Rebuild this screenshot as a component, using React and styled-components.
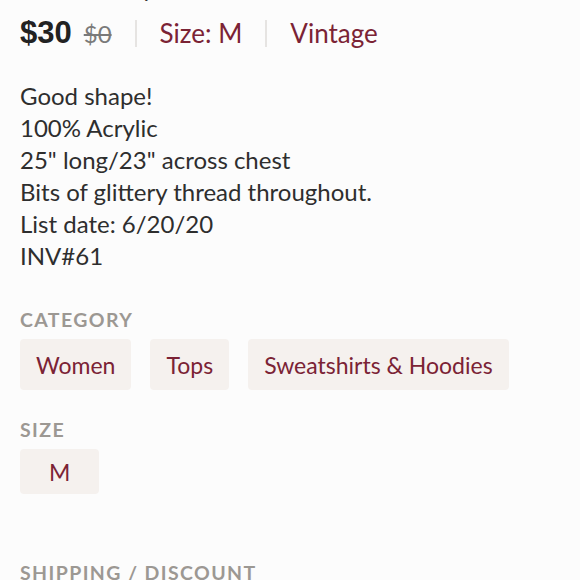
import React from "react";
import styled, { createGlobalStyle } from "styled-components";

const Global = createGlobalStyle`
  html, body { margin: 0; padding: 0; background: #fcfcfc; }
  body { font-family: "Lato", "Noto Sans", sans-serif; overflow: hidden; }
`;

const Page = styled.div`
  width: 580px;
  height: 580px;
  overflow: hidden;
  box-sizing: border-box;
  padding: 0 20px;
`;

const Inner = styled.div`
  margin-top: -28px;
`;

const Title = styled.h1`
  margin: 0;
  font-size: 24px;
  line-height: 32px;
  font-weight: 400;
  color: #333;
  white-space: nowrap;
`;

const PriceRow = styled.div`
  display: flex;
  align-items: center;
  height: 36px;
  margin-top: 11px;
`;

const Price = styled.span`
  font-family: "Liberation Sans", Arial, sans-serif;
  font-weight: 700;
  font-size: 31px;
  color: #222;
`;

const OldPrice = styled.span`
  font-size: 24px;
  color: #7a7a7a;
  text-decoration: line-through;
  margin-left: 12px;
`;

const Divider = styled.span`
  width: 2px;
  height: 27px;
  background: #e6e4e2;
  margin: 0 23px;
`;

const Maroon = styled.span`
  font-size: 26px;
  color: #7b2335;
`;

const Description = styled.div`
  margin-top: 29px;
  font-size: 24px;
  line-height: 32px;
  color: #2e2e2e;
`;

const Label = styled.div`
  margin-top: ${(p) => p.$gap}px;
  font-size: 19.5px;
  line-height: 20px;
  letter-spacing: 1.4px;
  font-weight: 700;
  color: #9c9893;
  text-transform: uppercase;
  white-space: nowrap;
`;

const Chips = styled.div`
  display: flex;
  gap: 19px;
  margin-top: 9px;
`;

const Chip = styled.div`
  display: flex;
  align-items: center;
  justify-content: center;
  height: ${(p) => p.$h}px;
  padding: 0 ${(p) => p.$px}px;
  background: #f5f1ee;
  border-radius: 4px;
  font-size: 23px;
  color: #7b2335;
  white-space: nowrap;
`;

export default function App() {
  return (
    <>
      <Global />
      <Page>
        <Inner>
          <Title>Festive Ivory Knit Sweater</Title>
          <PriceRow>
            <Price>$30</Price>
            <OldPrice>$0</OldPrice>
            <Divider />
            <Maroon>Size: M</Maroon>
            <Divider />
            <Maroon>Vintage</Maroon>
          </PriceRow>
          <Description>
            Good shape!
            <br />
            100% Acrylic
            <br />
            25" long/23" across chest
            <br />
            Bits of glittery thread throughout.
            <br />
            List date: 6/20/20
            <br />
            INV#61
          </Description>
          <Label $gap={38}>Category</Label>
          <Chips>
            <Chip $h={51} $px={16}>Women</Chip>
            <Chip $h={51} $px={16}>Tops</Chip>
            <Chip $h={51} $px={16}>Sweatshirts &amp; Hoodies</Chip>
          </Chips>
          <Label $gap={30}>Size</Label>
          <Chips>
            <Chip $h={45} $px={29}>M</Chip>
          </Chips>
          <Label $gap={69}>Shipping / Discount</Label>
        </Inner>
      </Page>
    </>
  );
}
